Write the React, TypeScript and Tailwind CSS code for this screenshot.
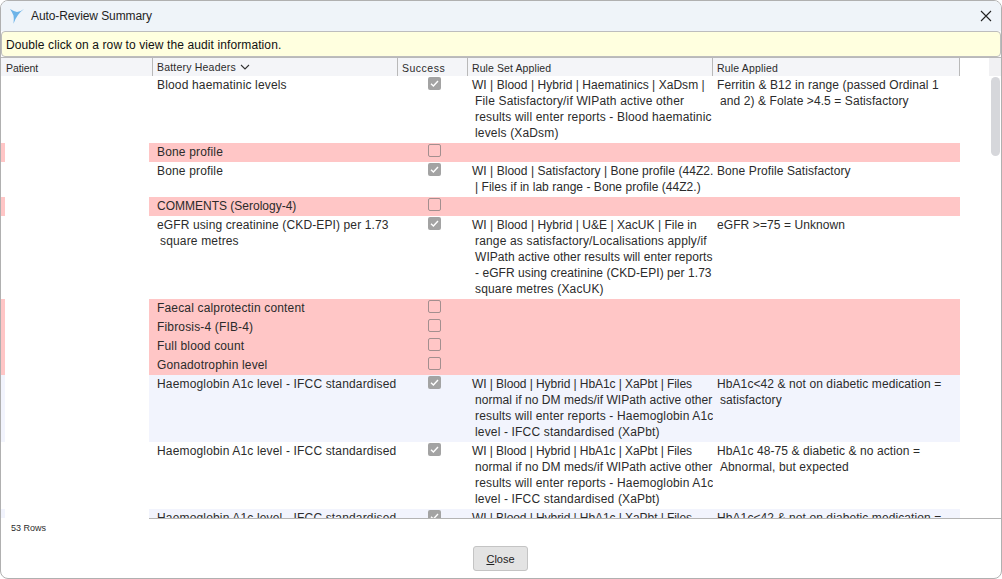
import React from "react";

type R = { h: number; bg: string; bat: string[]; ok: boolean; set?: string[]; rule?: string[]; strip?: string };

const pink = "bg-[#ffc6c6]";
const lav = "bg-[#f2f4fd]";

const rows: R[] = [
  { h: 67, bg: "bg-white", bat: ["Blood haematinic levels"], ok: true, set: ["WI | Blood | Hybrid | Haematinics | XaDsm |", "File Satisfactory/if WIPath active other", "results will enter reports - Blood haematinic", "levels (XaDsm)"], rule: ["Ferritin & B12 in range (passed Ordinal 1", "and 2) & Folate >4.5 = Satisfactory"] },
  { h: 19, bg: pink, strip: pink, bat: ["Bone profile"], ok: false },
  { h: 35, bg: "bg-white", bat: ["Bone profile"], ok: true, set: ["WI | Blood | Satisfactory | Bone profile (44Z2.)", "| Files if in lab range - Bone profile (44Z2.)"], rule: ["Bone Profile Satisfactory"] },
  { h: 19, bg: pink, strip: pink, bat: ["COMMENTS (Serology-4)"], ok: false },
  { h: 83, bg: "bg-white", bat: ["eGFR using creatinine (CKD-EPI) per 1.73", "square metres"], ok: true, set: ["WI | Blood | Hybrid | U&E | XacUK | File in", "range as satisfactory/Localisations apply/if", "WIPath active other results will enter reports", "- eGFR using creatinine (CKD-EPI) per 1.73", "square metres (XacUK)"], rule: ["eGFR >=75 = Unknown"] },
  { h: 19, bg: pink, strip: pink, bat: ["Faecal calprotectin content"], ok: false },
  { h: 19, bg: pink, strip: pink, bat: ["Fibrosis-4 (FIB-4)"], ok: false },
  { h: 19, bg: pink, strip: pink, bat: ["Full blood count"], ok: false },
  { h: 19, bg: pink, strip: pink, bat: ["Gonadotrophin level"], ok: false },
  { h: 67, bg: lav, strip: lav, bat: ["Haemoglobin A1c level - IFCC standardised"], ok: true, set: ["WI | Blood | Hybrid | HbA1c | XaPbt | Files", "normal if no DM meds/if WIPath active other", "results will enter reports - Haemoglobin A1c", "level - IFCC standardised (XaPbt)"], rule: ["HbA1c<42 & not on diabetic medication =", "satisfactory"] },
  { h: 67, bg: "bg-white", bat: ["Haemoglobin A1c level - IFCC standardised"], ok: true, set: ["WI | Blood | Hybrid | HbA1c | XaPbt | Files", "normal if no DM meds/if WIPath active other", "results will enter reports - Haemoglobin A1c", "level - IFCC standardised (XaPbt)"], rule: ["HbA1c 48-75 & diabetic & no action =", "Abnormal, but expected"] },
  { h: 67, bg: lav, strip: lav, bat: ["Haemoglobin A1c level - IFCC standardised"], ok: true, set: ["WI | Blood | Hybrid | HbA1c | XaPbt | Files"], rule: ["HbA1c<42 & not on diabetic medication ="] },
];

function track(l: string, col: string) {
  if (l.includes("HbA1c |")) return "tracking-[-0.07px]";
  if (l.includes("|")) return "tracking-[0.04px]";
  if (l.startsWith("WIPath") || l.startsWith("- eGFR") || l.startsWith("normal")) return "tracking-[0.06px]";
  if (l.startsWith("COMMENTS")) return "tracking-[0px]";
  if (l.startsWith("eGFR using")) return "tracking-[0.12px]";
  if (col === "rule") return "tracking-[0.09px]";
  return "tracking-[0.16px]";
}

function Lines({ lines, col }: { lines?: string[]; col: string }) {
  return (
    <>
      {(lines || []).map((l, i) => (
        <div key={i} className={`h-4 leading-4 whitespace-nowrap ${track(l, col)} ${i ? "pl-[3px]" : ""}`}>{l}</div>
      ))}
    </>
  );
}

function Check({ ok }: { ok: boolean }) {
  return ok ? (
    <div className="w-[13px] h-[13px] rounded-[2px] bg-[#a3a3a3] flex items-center justify-center">
      <svg width="11" height="11" viewBox="0 0 11 11" fill="none" stroke="#fff" strokeWidth="1.4"><path d="M2 5.8 4.4 8 9 3" /></svg>
    </div>
  ) : (
    <div className="w-[13px] h-[13px] rounded-[2px] border border-[#a38f8f]" />
  );
}

function Row({ r }: { r: R }) {
  return (
    <div className="flex shrink-0" style={{ height: r.h }}>
      <div className="w-[148px] shrink-0">
        {r.strip && <div className={`w-[4px] h-full ${r.strip}`} />}
      </div>
      <div className={`flex w-[811px] shrink-0 ${r.bg}`}>
        <div className="w-[268px] shrink-0 pl-2 pt-[1px] overflow-hidden">
          <Lines lines={r.bat} col="bat" />
        </div>
        <div className="w-[51px] shrink-0 flex justify-start pl-[11px] pt-[1px]">
          <Check ok={r.ok} />
        </div>
        <div className="w-[245px] shrink-0 pl-[4px] pt-[1px] overflow-hidden">
          <Lines lines={r.set} col="set" />
        </div>
        <div className="w-[247px] shrink-0 pl-[4px] pt-[1px] overflow-hidden">
          <Lines lines={r.rule} col="rule" />
        </div>
      </div>
    </div>
  );
}

export default function App() {
  return (
    <div className="w-[1002px] h-[579px] bg-white overflow-hidden text-[#2b2b2b] text-[12px] flex flex-col border border-[#b0b0b0] rounded-[8px]" style={{ fontFamily: '"Liberation Sans", Arial, sans-serif' }}>
      <div className="h-[30px] shrink-0 bg-[#eff4f9] flex items-center pl-[8px] pr-[9px]">
        <svg width="16" height="17" viewBox="0 0 16 17" className="shrink-0">
          <path d="M1 1Q5 3.5 8 4 12 3.5 15 1 11 4 9 7 6 11 4.5 15.7 5 10 4.5 7.5 3 4 1 1Z" fill="#6db4e8" />
        </svg>
        <span className="ml-[6px] text-[#1f1f1f] tracking-[-0.1px]">Auto-Review Summary</span>
        <svg width="12" height="12" viewBox="0 0 12 12" className="ml-auto" stroke="#222" strokeWidth="1.1" fill="none"><path d="M1 1 11 11M11 1 1 11" /></svg>
      </div>
      <div className="h-[26px] shrink-0 bg-[#ffffdf] border border-[#bdbdbd] rounded-[4px] flex items-center pl-[4px] pt-[1px] text-[#111] tracking-[0.1px]">
        Double click on a row to view the audit information.
      </div>
      <div className="flex-1 flex flex-col min-h-0">
        <div className="h-[19px] shrink-0 flex bg-[#f4f5f8] border-t border-[#b9b9b9] text-[10.5px] leading-[20px] tracking-[0.16px]">
          <div className="w-[152px] shrink-0 pl-[5px] border-r border-[#b9b9b9] tracking-[-0.1px]">Patient</div>
          <div className="w-[245px] shrink-0 pl-[4px] border-r border-[#b9b9b9] flex items-center gap-[4px] tracking-[0.2px]">
            Battery Headers
            <svg width="10" height="6" viewBox="0 0 10 6" fill="none" stroke="#333" strokeWidth="1.1"><path d="M1 1 5 5 9 1" /></svg>
          </div>
          <div className="w-[70px] shrink-0 pl-[4px] border-r border-[#b9b9b9] tracking-[0.5px]">Success</div>
          <div className="w-[245px] shrink-0 pl-[4px] border-r border-[#b9b9b9] tracking-[0.1px]">Rule Set Applied</div>
          <div className="w-[247px] shrink-0 pl-[4px] border-r border-[#b9b9b9]">Rule Applied</div>
          <div className="w-[29px] shrink-0 bg-white" />
          <div className="flex-1 bg-[#f1f1f3]" />
        </div>
        <div className="h-[442px] shrink-0 overflow-hidden flex relative">
          <div className="flex flex-col">
            {rows.map((r, i) => <Row key={i} r={r} />)}
          </div>
          <div className="absolute right-[1px] top-[1px] w-[9px] h-[79px] rounded-[5px] bg-[#d6d7db]" />
        </div>
        <div className="h-[1px] shrink-0 ml-[148px] bg-[#b4b4b4]" />
        <div className="h-[19px] shrink-0 pl-[10px] text-[9px] leading-[19px] flex items-center">53 Rows</div>
        <div className="flex-1 flex justify-center items-start pt-[8px] pr-[2px]">
          <button className="w-[55px] h-[25px] pt-[2px] pl-[1px] bg-[#e3e3e3] border border-[#c4c4c4] rounded-[3px] text-[11px] text-[#222]"><span className="underline">C</span>lose</button>
        </div>
      </div>
    </div>
  );
}
